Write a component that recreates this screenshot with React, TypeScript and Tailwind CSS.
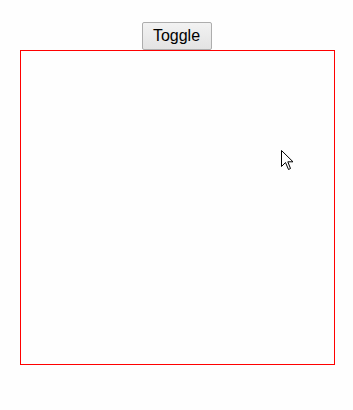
import React, { useState } from 'react';

function Cursor() {
  return (
    <svg className="absolute left-[260px] top-[99px]" width="13" height="21" viewBox="0 0 13 21" fill="none">
      <path d="M0.5 0.5 L0.5 16.5 L4.5 12.5 L7.5 19.5 L9.5 18.5 L6.8 11.8 L12 11.8 Z" fill="#fff" stroke="#000" strokeWidth="1" strokeLinejoin="miter" />
    </svg>
  );
}

export default function App() {
  const [shown, setShown] = useState(true);

  return (
    <div className="flex h-[410px] w-full flex-col items-center bg-[#fefefe] pt-[22px] font-['Liberation_Sans',Arial,sans-serif]">
      <button
        type="button"
        onClick={() => setShown(!shown)}
        className="h-[28px] w-[70px] rounded-[2px] border border-[#adadad] bg-gradient-to-b from-[#f2f2f2] to-[#e3e3e3] text-[16px] leading-none text-black"
      >
        Toggle
      </button>
      <div className="relative ml-[20px] h-[315px] w-[315px] self-start border border-[#ff0000]">
        {shown ? <Cursor /> : null}
      </div>
    </div>
  );
}
